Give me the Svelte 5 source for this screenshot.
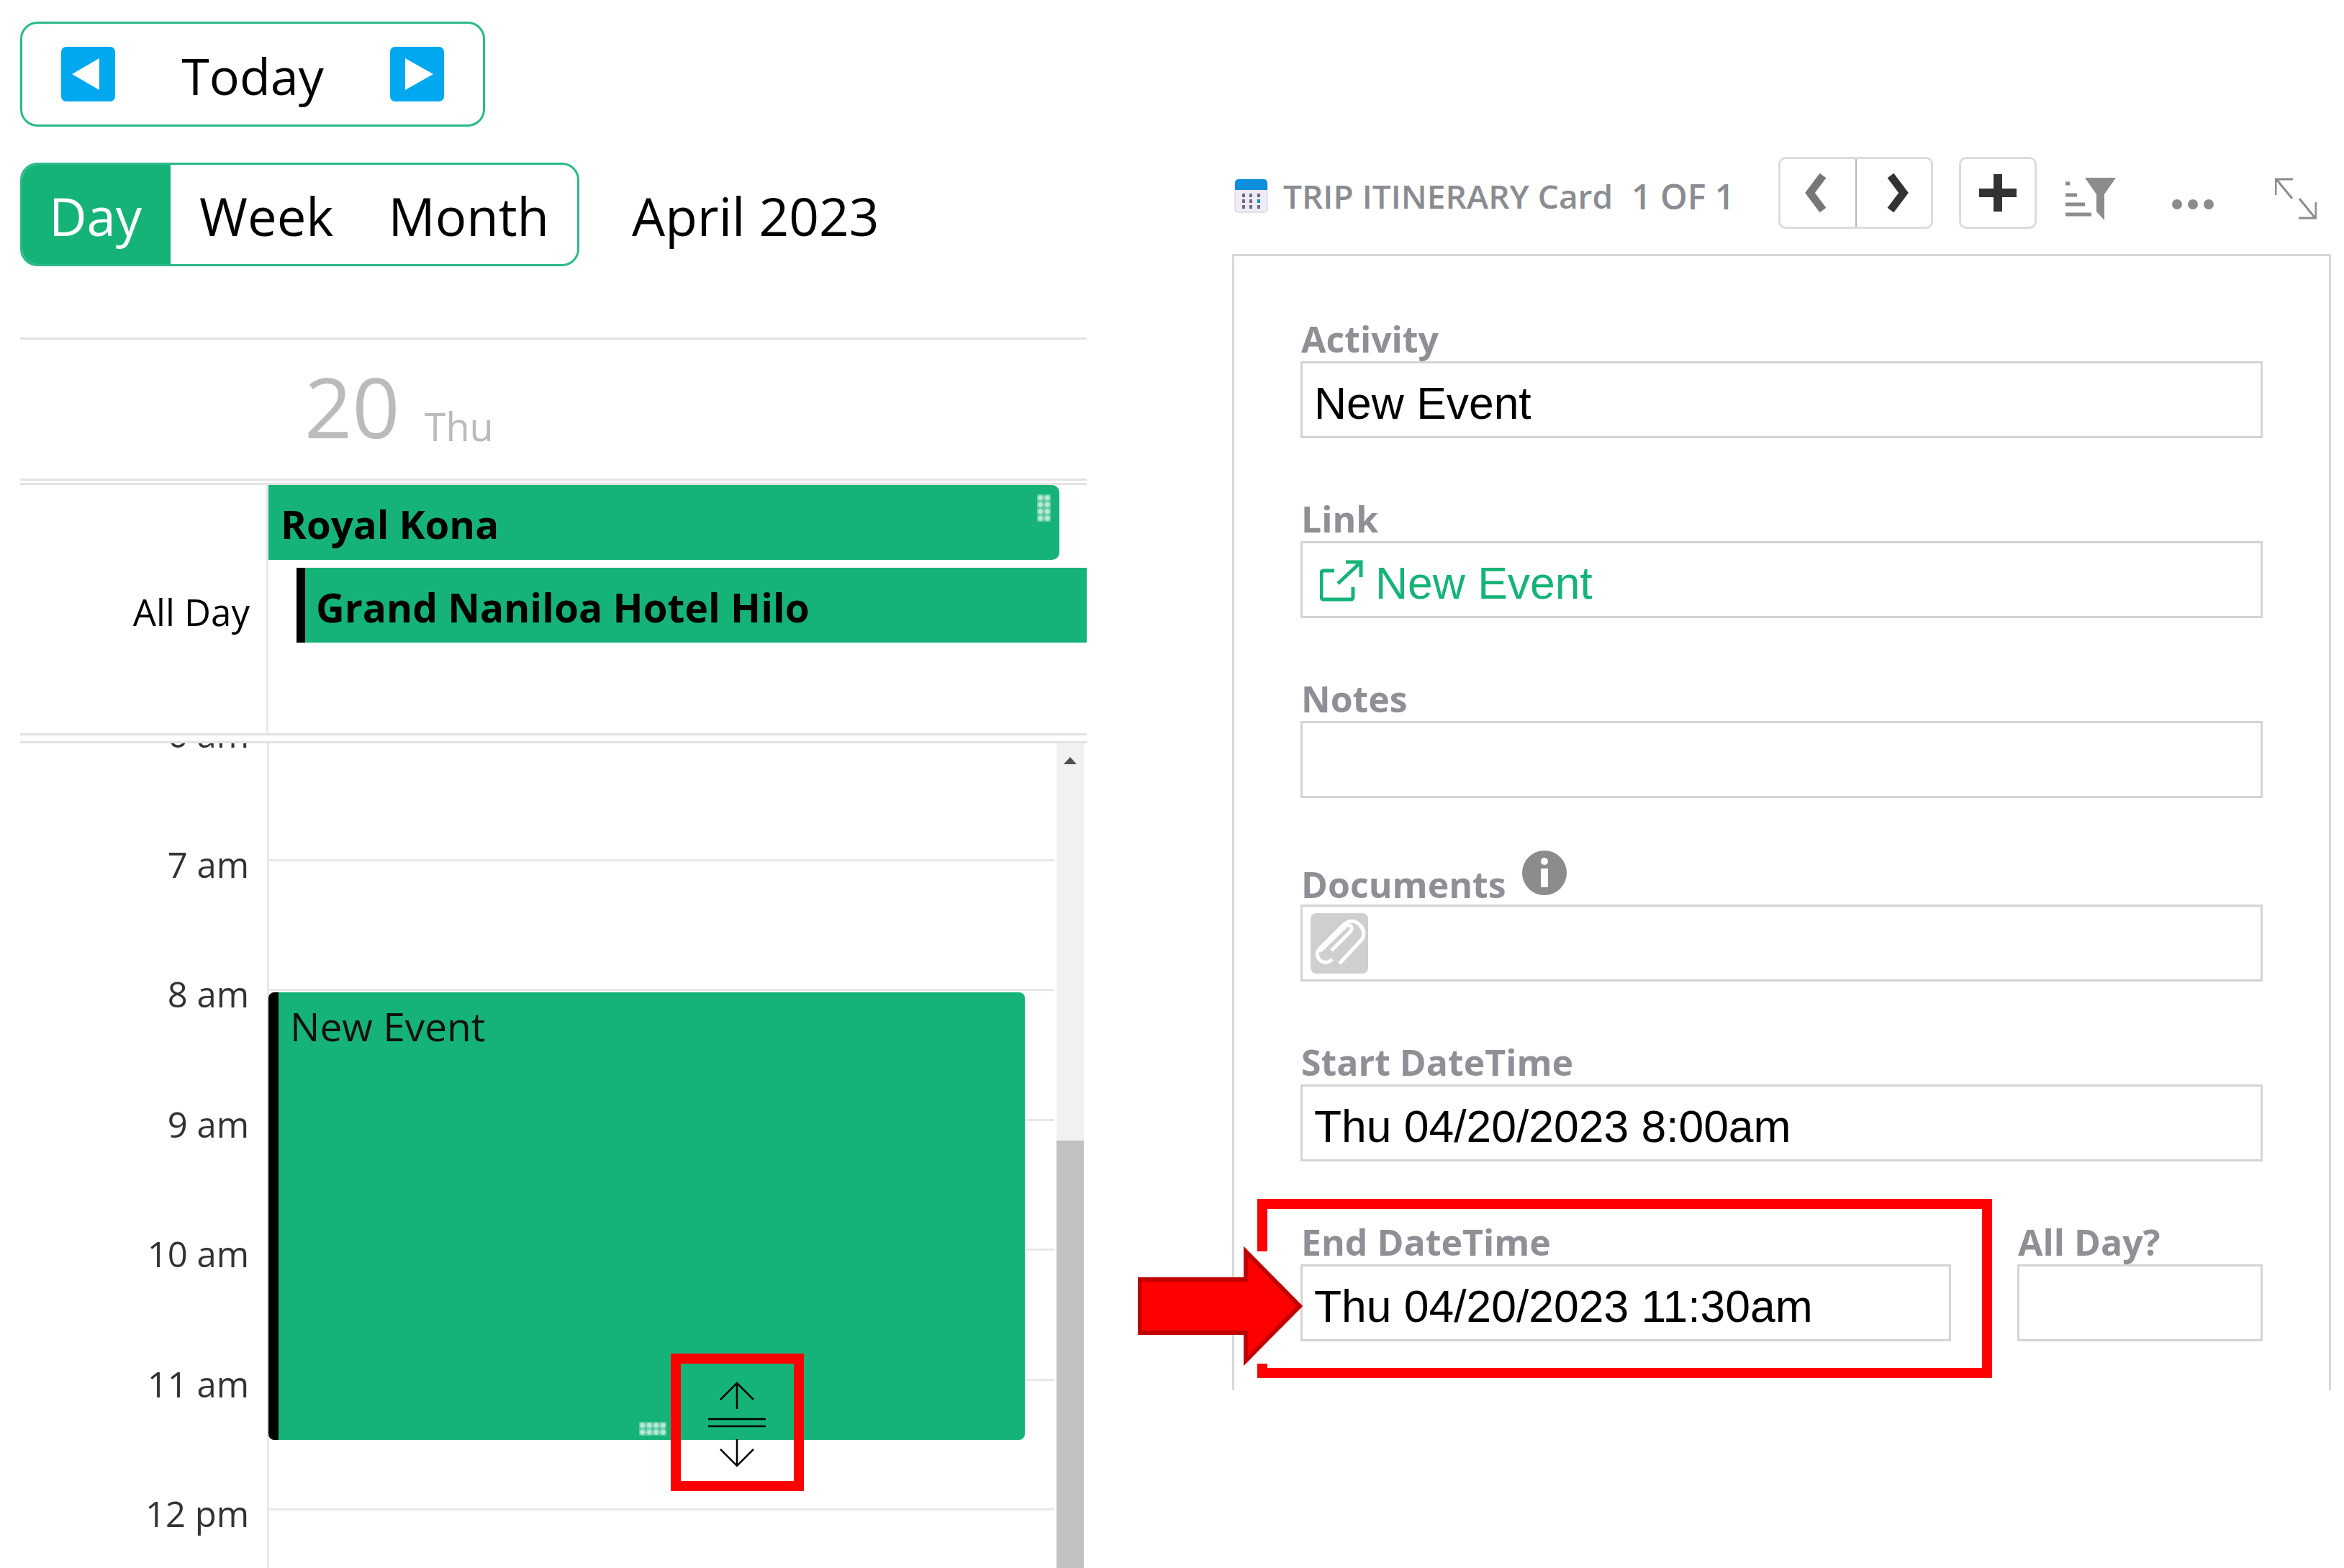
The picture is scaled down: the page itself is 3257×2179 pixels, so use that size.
<script>
  const hours = ["6 am", "7 am", "8 am", "9 am", "10 am", "11 am", "12 pm"];
</script>

<div class="page">
  <section class="cal">
    <div class="nav">
      <svg class="navBtn" viewBox="0 0 75 76"><rect width="75" height="76" rx="7" fill="#00a8f0" /><polygon points="15,38 53,16 53,60" fill="#fff" /></svg>
      <span class="navText">Today</span>
      <svg class="navBtn" viewBox="0 0 75 76"><rect width="75" height="76" rx="7" fill="#00a8f0" /><polygon points="60,38 21,16 21,60" fill="#fff" /></svg>
    </div>

    <div class="viewRow">
      <div class="views">
        <span class="view active">Day</span>
        <span class="view week">Week</span>
        <span class="view month">Month</span>
      </div>
      <span class="monthName">April 2023</span>
    </div>

    <header class="dayHead">
      <span class="dayNum">20</span>
      <span class="dayName">Thu</span>
    </header>

    <div class="allDay">
      <div class="allDayLabel">All Day</div>
      <div class="allDayCell">
        <div class="bar kona">
          Royal Kona
          <span class="grip gripTall"></span>
        </div>
        <div class="bar hilo">Grand Naniloa Hotel Hilo</div>
      </div>
    </div>

    <div class="timeGrid">
      <div class="hours">
        <div class="hoursInner">
          {#each hours as h}
            <div class="hour">
              <span class="hourLabel">{h}</span>
              <span class="hourCell"></span>
            </div>
          {/each}
          <div class="event">
            New Event
            <span class="grip gripWide"></span>
          </div>
        </div>
      </div>
      <div class="scroll">
        <svg class="scrollArrow" viewBox="0 0 20 12"><polygon points="10,1 19,11 1,11" fill="#505050" /></svg>
        <div class="thumb"></div>
      </div>
    </div>
  </section>

  <section class="card">
    <div class="cardHead">
      <svg class="calIcon" viewBox="0 0 47 48">
        <rect x="1" y="4" width="45" height="43" rx="4" fill="#efeaf6" stroke="#cfcbd8" stroke-width="1" />
        <path d="M1 16V6a5 5 0 0 1 5-5h35a5 5 0 0 1 5 5v10z" fill="#0b8fdc" />
        <g fill="#6e6b84">
          <rect x="11" y="21" width="4" height="5" /><rect x="21" y="21" width="4" height="5" /><rect x="32" y="21" width="4" height="5" />
          <rect x="11" y="29" width="4" height="5" /><rect x="21" y="29" width="4" height="5" /><rect x="32" y="29" width="4" height="5" fill="#0b8fdc" />
          <rect x="11" y="37" width="4" height="5" /><rect x="21" y="37" width="4" height="5" /><rect x="32" y="37" width="4" height="5" />
        </g>
      </svg>
      <span class="cardTitle">TRIP ITINERARY Card</span>
      <span class="cardCount">1 OF 1</span>
      <div class="btnGroup">
        <span class="btn">
          <svg viewBox="0 0 40 56" width="40" height="56"><path d="M27 4 9 28l18 24" fill="none" stroke="#777" stroke-width="11" /></svg>
        </span>
        <span class="btn">
          <svg viewBox="0 0 40 56" width="40" height="56"><path d="M15 4l18 24-18 24" fill="none" stroke="#333" stroke-width="11" /></svg>
        </span>
      </div>
      <span class="btn btnAdd">
        <svg viewBox="0 0 56 56" width="56" height="56"><path d="M28 2v52M2 28h52" fill="none" stroke="#333" stroke-width="12" /></svg>
      </span>
      <svg class="filterIcon" viewBox="0 0 70 60">
        <path d="M27 1h43L54 24v36l-11-12V24z" fill="#8c8c8c" />
        <path d="M0 9h6M0 25h16M0 38h27M0 52h36" stroke="#8c8c8c" stroke-width="5" />
      </svg>
      <svg class="dotsIcon" viewBox="0 0 61 16"><circle cx="8" cy="8" r="7" fill="#8c8c8c" /><circle cx="30" cy="8" r="7" fill="#8c8c8c" /><circle cx="52" cy="8" r="7" fill="#8c8c8c" /></svg>
      <svg class="expandIcon" viewBox="0 0 58 58">
        <path d="M1 24V2h24M2 2l22 27M57 34v22H33M56 56 34 29" fill="none" stroke="#8c8c8c" stroke-width="3" />
      </svg>
    </div>

    <div class="panel">
      <div class="field">
        <div class="label">Activity</div>
        <div class="input">New Event</div>
      </div>
      <div class="field">
        <div class="label">Link</div>
        <div class="input link">
          <svg class="linkIcon" viewBox="0 0 60 58">
            <path d="M20 15H5a3 3 0 0 0-3 3v34a3 3 0 0 0 3 3h38a3 3 0 0 0 3-3V38M25 33 57 3M36 3h21v21" fill="none" stroke="#16b378" stroke-width="5" />
          </svg>
          New Event
        </div>
      </div>
      <div class="field">
        <div class="label">Notes</div>
        <div class="input"></div>
      </div>
      <div class="field">
        <div class="label docs">
          Documents
          <svg class="infoIcon" viewBox="0 0 62 64">
            <circle cx="31" cy="32" r="31" fill="#8c8c8c" />
            <circle cx="31" cy="16" r="5" fill="#fff" />
            <rect x="26" y="26" width="10" height="26" fill="#fff" />
          </svg>
        </div>
        <div class="input attach">
          <span class="clip">
            <svg viewBox="0 0 80 84" width="80" height="84">
              <path d="M15 57 50 23c6-6 13 1 7 7L31 56" transform="translate(-2 -4)" fill="none" stroke="#fff" stroke-width="5" />
              <path d="M40 70 70 38c8-9 2-19-3-23-7-6-15-5-22 2L12 50c-5 6-2 13 2 16 5 4 11 3 16-2" fill="none" stroke="#fff" stroke-width="5" />
            </svg>
          </span>
        </div>
      </div>
      <div class="field">
        <div class="label">Start DateTime</div>
        <div class="input">Thu 04/20/2023 8:00am</div>
      </div>
      <div class="fieldRow">
        <div class="field endField">
          <div class="label">End DateTime</div>
          <div class="input">Thu 04/20/2023 11:30am</div>
        </div>
        <div class="field allDayField">
          <div class="label">All Day?</div>
          <div class="input"></div>
        </div>
      </div>
    </div>
  </section>

  <!-- annotations drawn on top of the screenshot -->
  <div class="redBox resizeBox">
    <svg viewBox="0 0 157 163" width="157" height="163">
      <path d="M78 27v36M55 50l23-23 23 23M38 77h80M38 87h80M78 105v37M55 119l23 23 23-23" fill="none" stroke="#000" stroke-width="2.5" />
    </svg>
  </div>
  <div class="redBox endBox"></div>
  <svg class="arrow" viewBox="0 0 240 180" width="240" height="180">
    <rect x="170" y="14" width="25" height="156" fill="#fff" />
    <polygon points="13,53 160,53 160,14 235,90 160,166 160,127 13,127" fill="#f00" stroke="#c00000" stroke-width="6" />
  </svg>
</div>

<style>
  :global(body) {
    margin: 0;
    background: #fff;
  }

  .page {
    position: relative;
    display: flex;
    width: 3257px;
    height: 2179px;
    overflow: hidden;
    font-family: "Open Sans", sans-serif;
    color: #000;
  }

  .cal {
    width: 1482px;
    margin-left: 28px;
    padding-top: 30px;
    display: flex;
    flex-direction: column;
    flex-shrink: 0;
  }

  .nav {
    box-sizing: border-box;
    width: 646px;
    height: 146px;
    border: 3px solid #2bb98a;
    border-radius: 24px;
    display: flex;
    align-items: center;
    justify-content: space-between;
    padding: 0 54px;
  }

  .navBtn {
    width: 75px;
    height: 76px;
  }

  .navText {
    padding-top: 4px;
    font-size: 70px;
    line-height: 1;
  }

  .viewRow {
    margin-top: 50px;
    display: flex;
    align-items: center;
  }

  .views {
    box-sizing: border-box;
    width: 777px;
    height: 144px;
    border: 3px solid #2bb98a;
    border-radius: 24px;
    display: flex;
    align-items: stretch;
    overflow: hidden;
    font-size: 72.5px;
  }

  .view {
    display: flex;
    align-items: center;
    padding-top: 3px;
  }

  .active {
    width: 209px;
    justify-content: center;
    background: #16b378;
    color: #fff;
    margin: -3px 0 -3px -3px;
    border-top: 3px solid #000;
    border-bottom: 3px solid #000;
  }

  .week {
    margin-left: 40px;
  }

  .month {
    margin-left: 76px;
  }

  .monthName {
    margin-left: 73px;
    padding-top: 3px;
    font-size: 73px;
  }

  .dayHead {
    box-sizing: border-box;
    margin-top: 99px;
    height: 199px;
    border-top: 3px solid #e3e3e3;
    border-bottom: 3px solid #e3e3e3;
    display: flex;
    align-items: flex-start;
    padding-left: 395px;
    color: #bbb;
  }

  .dayNum {
    font-size: 116px;
    line-height: 140px;
    margin-top: 22px;
  }

  .dayName {
    font-size: 54px;
    margin: 83px 0 0 34px;
  }

  .allDay {
    box-sizing: border-box;
    margin-top: 3px;
    height: 351px;
    border-top: 3px solid #e3e3e3;
    border-bottom: 3px solid #e3e3e3;
    display: flex;
  }

  .allDayLabel {
    box-sizing: border-box;
    width: 345px;
    padding: 146px 26px 0 0;
    text-align: right;
    font-size: 51px;
    line-height: 60px;
  }

  .allDayCell {
    flex: 1;
    border-left: 3px solid #e8e8e8;
    margin-left: -3px;
    display: flex;
    flex-direction: column;
  }

  .bar {
    position: relative;
    box-sizing: border-box;
    height: 104px;
    background: #16b378;
    display: flex;
    align-items: center;
    padding-top: 4px;
    font-weight: 700;
    font-size: 54.5px;
    color: #000;
  }

  .kona {
    margin-right: 38px;
    padding-left: 17px;
    border-radius: 0 10px 10px 0;
  }

  .hilo {
    margin-top: 11px;
    margin-left: 39px;
    padding-left: 15px;
    border-left: 12px solid #000;
    font-size: 55px;
  }

  .grip {
    position: absolute;
    background-image: radial-gradient(circle, rgba(255, 255, 255, 0.7) 35%, rgba(255, 255, 255, 0.25) 75%);
    background-size: 9.5px 9.5px;
  }

  .gripTall {
    right: 12px;
    top: 13px;
    width: 19px;
    height: 38px;
  }

  .gripWide {
    right: 498px;
    bottom: 6px;
    width: 38px;
    height: 19px;
  }

  .timeGrid {
    margin-top: 8px;
    border-top: 3px solid #e3e3e3;
    flex: 1;
    min-height: 0;
    display: flex;
  }

  .hours {
    width: 1437px;
    overflow: hidden;
  }

  .hoursInner {
    position: relative;
    margin-top: -20px;
  }

  .hour {
    box-sizing: border-box;
    height: 180.5px;
    border-top: 3px solid #e8e8e8;
    display: flex;
  }

  .hourLabel {
    box-sizing: border-box;
    width: 343px;
    background: #fff;
    margin-top: -26px;
    height: 60px;
    padding-right: 25px;
    text-align: right;
    font-size: 49px;
    line-height: 60px;
    color: #333;
  }

  .hourCell {
    flex: 1;
    margin-top: -3px;
    border-left: 3px solid #e8e8e8;
  }

  .event {
    position: absolute;
    left: 345px;
    top: 366px;
    box-sizing: border-box;
    width: 1051px;
    height: 622px;
    background: #16b378;
    border-left: 14px solid #000;
    border-radius: 8px;
    padding: 12px 0 0 16px;
    font-size: 55px;
    line-height: 70px;
    color: #111;
  }

  .scroll {
    margin-left: 3px;
    width: 38px;
    background: #f1f1f1;
    display: flex;
    flex-direction: column;
    align-items: center;
  }

  .scrollArrow {
    width: 20px;
    height: 12px;
    margin-top: 18px;
  }

  .thumb {
    width: 100%;
    margin-top: 522px;
    flex: 1;
    background: #c1c1c1;
  }

  .card {
    width: 1527px;
    margin-left: 202px;
    padding-top: 218px;
    flex-shrink: 0;
  }

  .cardHead {
    height: 100px;
    margin-bottom: 35px;
    display: flex;
    align-items: center;
    color: #8a8c91;
  }

  .calIcon {
    width: 47px;
    height: 48px;
    margin: 8px 0 0 3px;
  }

  .cardTitle {
    margin-left: 21px;
    padding-top: 8px;
    font-size: 46px;
    font-weight: 600;
  }

  .cardCount {
    margin-left: 26px;
    padding-top: 8px;
    font-size: 48px;
    font-weight: 600;
  }

  .btnGroup {
    margin-left: 61px;
    display: flex;
    height: 100px;
    border: 3px solid #dcdcdc;
    box-sizing: border-box;
    border-radius: 10px;
    width: 215px;
  }

  .btn {
    flex: 1;
    display: flex;
    align-items: center;
    justify-content: center;
  }

  .btn + .btn {
    border-left: 2px solid #b5b5b5;
  }

  .btnAdd {
    flex: none;
    box-sizing: border-box;
    width: 108px;
    height: 100px;
    margin-left: 36px;
    border: 3px solid #dcdcdc;
    border-radius: 10px;
  }

  .filterIcon {
    width: 70px;
    height: 60px;
    margin: 16px 0 0 40px;
  }

  .dotsIcon {
    width: 61px;
    height: 16px;
    margin: 32px 0 0 77px;
  }

  .expandIcon {
    width: 58px;
    height: 58px;
    margin: 16px 0 0 83px;
  }

  .panel {
    box-sizing: border-box;
    height: 1579px;
    border: 3px solid #d8d8d8;
    border-bottom: none;
    padding: 92px 92px 0;
    display: flex;
    flex-direction: column;
    gap: 89px;
  }

  .label {
    height: 54px;
    padding-left: 1px;
    font-size: 50px;
    font-weight: 700;
    line-height: 46px;
    color: #8f9096;
  }

  .docs {
    height: 59px;
    display: flex;
    align-items: flex-end;
    gap: 22px;
    line-height: 56px;
  }

  .infoIcon {
    width: 62px;
    height: 64px;
    margin-bottom: 12px;
  }

  .input {
    box-sizing: border-box;
    height: 107px;
    padding-top: 9px;
    border: 3px solid #d4d4d4;
    padding-left: 16px;
    display: flex;
    align-items: center;
    font-family: "Liberation Sans", Arial, sans-serif;
    font-size: 62.4px;
    color: #000;
  }

  .link {
    color: #16b378;
    gap: 17px;
    padding-left: 24px;
  }

  .linkIcon {
    width: 60px;
    height: 58px;
    margin-top: -6px;
  }

  .attach {
    padding-top: 0;
    padding-left: 11px;
  }

  .clip {
    width: 80px;
    height: 84px;
    background: #cfcfcf;
    border-radius: 8px;
  }

  .clip svg {
    display: block;
  }

  .fieldRow {
    display: flex;
    gap: 92px;
  }

  .endField {
    width: 904px;
  }

  .allDayField {
    flex: 1;
  }

  .redBox {
    position: absolute;
    box-sizing: border-box;
    border: 14px solid #f00;
  }

  .resizeBox {
    left: 932px;
    top: 1881px;
    width: 185px;
    height: 191px;
  }

  .resizeBox svg {
    display: block;
  }

  .endBox {
    left: 1747px;
    top: 1666px;
    width: 1021px;
    height: 249px;
  }

  .arrow {
    position: absolute;
    left: 1571px;
    top: 1725px;
  }
</style>
